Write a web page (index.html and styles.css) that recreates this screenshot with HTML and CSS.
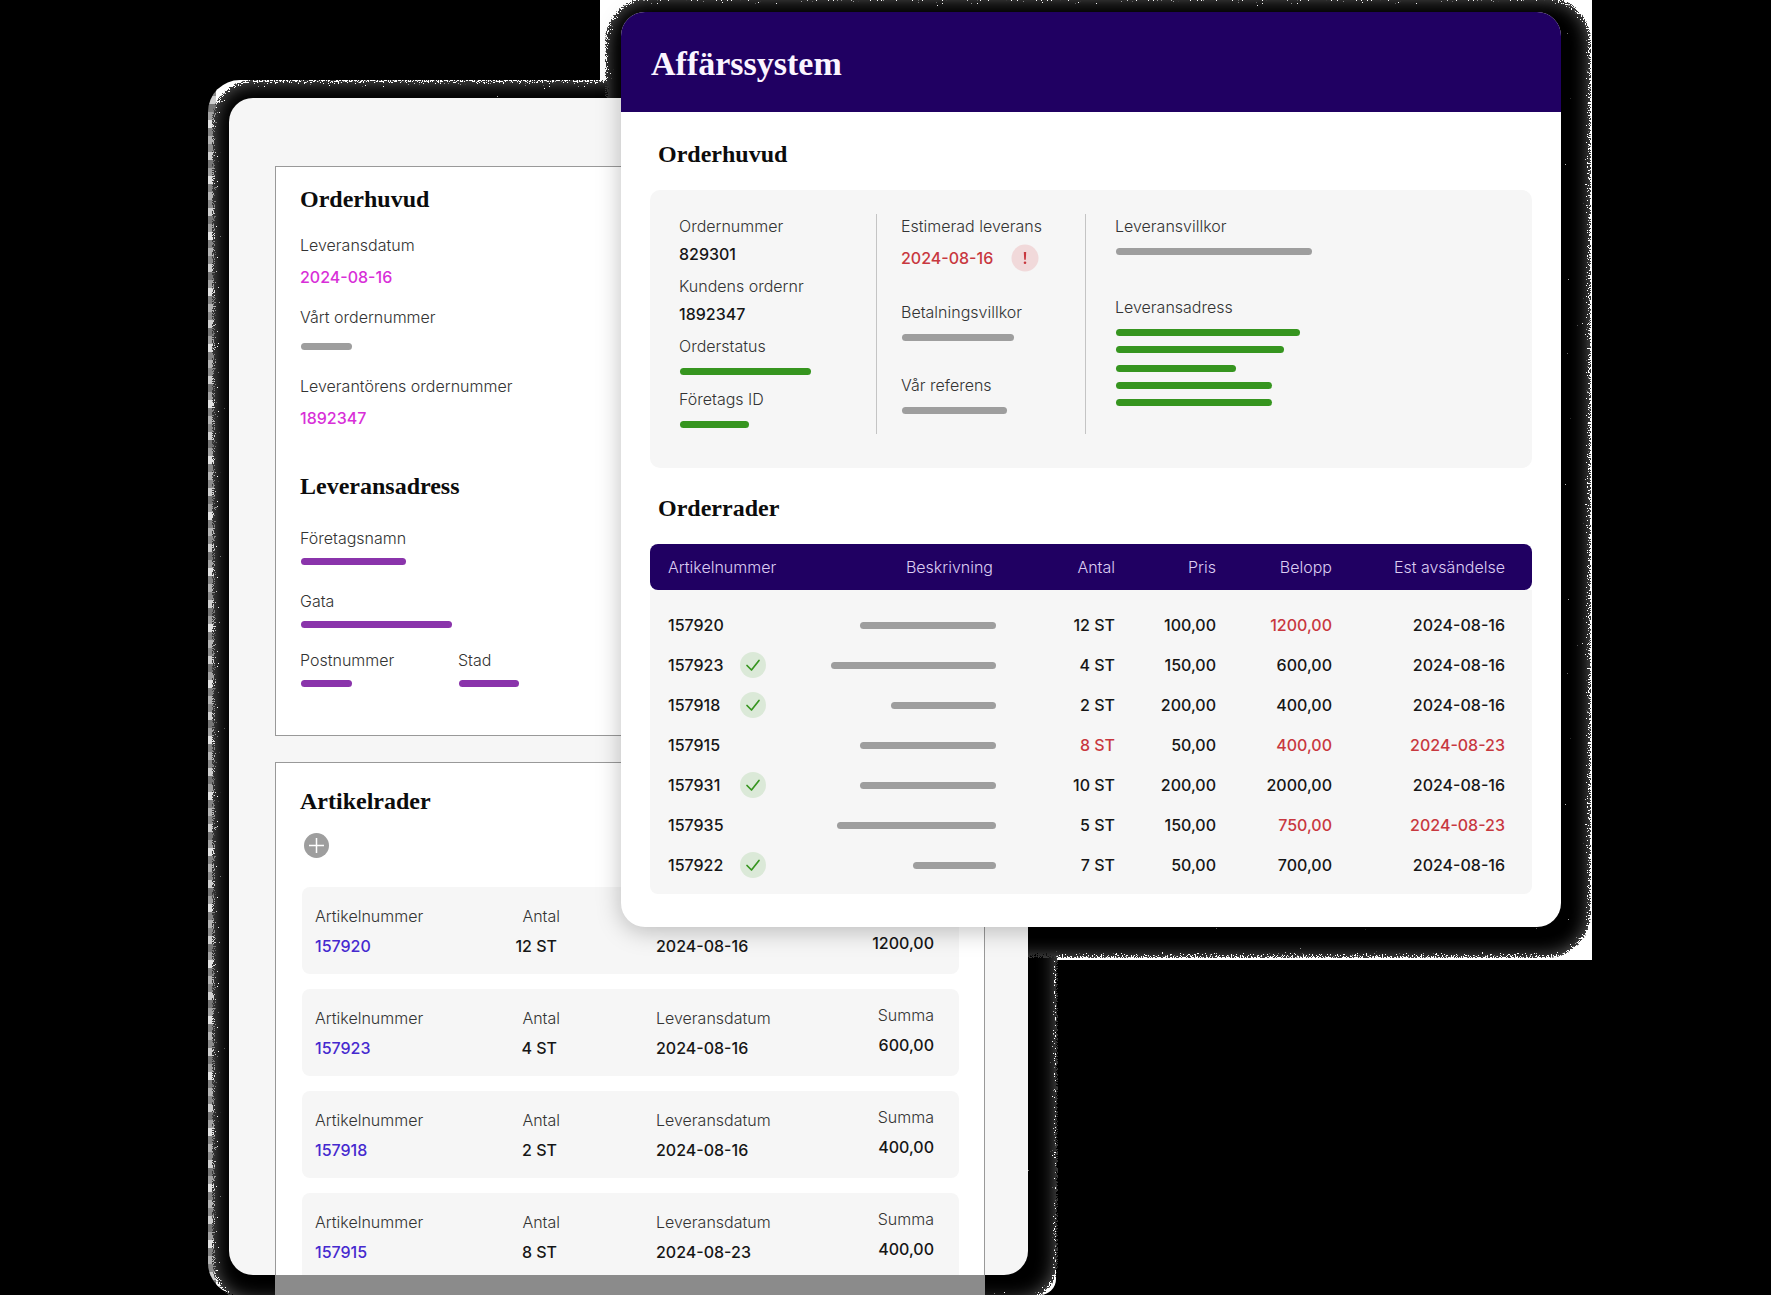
FILE: index.html
```html
<!DOCTYPE html>
<html lang="sv">
<head>
<meta charset="utf-8">
<meta name="viewport" content="width=device-width, initial-scale=1">
<title>Affärssystem</title>
<link rel="stylesheet" href="styles.css">
</head>
<body>
<svg class="defs" aria-hidden="true">
  <filter id="grain" x="-1%" y="-1%" width="102%" height="102%" color-interpolation-filters="sRGB">
    <feGaussianBlur in="SourceAlpha" stdDeviation="5" result="soft"/>
    <feTurbulence type="fractalNoise" baseFrequency="0.8" numOctaves="2" seed="4"/>
    <feColorMatrix values="0 0 0 0 0  0 0 0 0 0  0 0 0 0 0  1.200 0 0 0 -0.080" result="noise"/>
    <feComposite in="soft" in2="noise" operator="arithmetic" k2="1" k3="1" k4="-1.080"/>
    <feComponentTransfer result="mask"><feFuncA type="linear" slope="30"/></feComponentTransfer>
    <feComposite in="SourceGraphic" in2="mask" operator="in"/>
  </filter>
  <symbol id="check" viewBox="0 0 26 26">
    <path d="M7 13.5 11.5 18 19 8.500" fill="none" stroke="currentColor" stroke-width="1.700" stroke-linecap="round" stroke-linejoin="round"/>
  </symbol>
</svg>
<main class="stage">
  <section class="document">
    <div class="sheet">
      <div class="panel">
        <h2 class="heading">Orderhuvud</h2>
        <p class="label t18">Leveransdatum</p>
        <p class="value magenta t8">2024-08-16</p>
        <p class="label t16">Vårt ordernummer</p>
        <span class="bar gray t14" style="width:51px"></span>
        <p class="label t24">Leverantörens ordernummer</p>
        <p class="value magenta t8">1892347</p>
        <h2 class="heading t40">Leveransadress</h2>
        <p class="label t24">Företagsnamn</p>
        <span class="bar violet t8" style="width:105px"></span>
        <p class="label t24">Gata</p>
        <span class="bar violet t8" style="width:151px"></span>
        <div class="place t20">
          <div>
            <p class="label">Postnummer</p>
            <span class="bar violet t8" style="width:51px"></span>
          </div>
          <div>
            <p class="label">Stad</p>
            <span class="bar violet t8" style="width:60px"></span>
          </div>
        </div>
      </div>
      <div class="panel panel-rows">
        <h2 class="heading">Artikelrader</h2>
        <button class="add t16" type="button" aria-label="Lägg till artikelrad">
          <svg viewBox="0 0 25 25" width="25" height="25"><circle cx="12.500" cy="12.500" r="12.500" fill="#9e9e9e"/><path d="M12.500 5v15M5 12.500h15" stroke="#fff" stroke-width="1.500"/></svg>
        </button>
        <div class="cards">
          <dl class="card">
            <div><dt>Artikelnummer</dt><dd class="blue">157920</dd></div>
            <div class="qty"><dt>Antal</dt><dd>12 ST</dd></div>
            <div class="date"><dt>Leveransdatum</dt><dd>2024-08-16</dd></div>
            <div class="sum"><dt>Summa</dt><dd>1200,00</dd></div>
          </dl>
          <dl class="card">
            <div><dt>Artikelnummer</dt><dd class="blue">157923</dd></div>
            <div class="qty"><dt>Antal</dt><dd>4 ST</dd></div>
            <div class="date"><dt>Leveransdatum</dt><dd>2024-08-16</dd></div>
            <div class="sum"><dt>Summa</dt><dd>600,00</dd></div>
          </dl>
          <dl class="card">
            <div><dt>Artikelnummer</dt><dd class="blue">157918</dd></div>
            <div class="qty"><dt>Antal</dt><dd>2 ST</dd></div>
            <div class="date"><dt>Leveransdatum</dt><dd>2024-08-16</dd></div>
            <div class="sum"><dt>Summa</dt><dd>400,00</dd></div>
          </dl>
          <dl class="card">
            <div><dt>Artikelnummer</dt><dd class="blue">157915</dd></div>
            <div class="qty"><dt>Antal</dt><dd>8 ST</dd></div>
            <div class="date"><dt>Leveransdatum</dt><dd>2024-08-23</dd></div>
            <div class="sum"><dt>Summa</dt><dd>400,00</dd></div>
          </dl>
        </div>
      </div>
    </div>
    <div class="tail"></div>
  </section>

  <section class="system">
    <div class="window">
      <header class="titlebar"><h1>Affärssystem</h1></header>
      <div class="content">
        <h2 class="heading">Orderhuvud</h2>
        <div class="info">
          <div class="col">
            <p class="label">Ordernummer</p>
            <p class="value t4">829301</p>
            <p class="label t8">Kundens ordernr</p>
            <p class="value t4">1892347</p>
            <p class="label t8">Orderstatus</p>
            <span class="bar green t10" style="width:131px"></span>
            <p class="label t12">Företags ID</p>
            <span class="bar green t10" style="width:69px"></span>
          </div>
          <div class="col">
            <p class="label">Estimerad leverans</p>
            <p class="value alert red">2024-08-16
              <svg class="warning" viewBox="0 0 28 28" width="28" height="28" role="img" aria-label="Avvikelse"><circle cx="14" cy="14" r="13.500" fill="#f1d9da"/><path d="M12.800 8h2.400l-.4 7.800h-1.600z" fill="#c8383f"/><circle cx="14" cy="18.800" r="1.300" fill="#c8383f"/></svg>
            </p>
            <p class="label t28">Betalningsvillkor</p>
            <span class="bar gray t10" style="width:112px"></span>
            <p class="label t32">Vår referens</p>
            <span class="bar gray t10" style="width:105px"></span>
          </div>
          <div class="col">
            <p class="label">Leveransvillkor</p>
            <span class="bar gray t10" style="width:196px"></span>
            <p class="label t40">Leveransadress</p>
            <span class="bar green t10" style="width:184px"></span>
            <span class="bar green t10" style="width:168px"></span>
            <span class="bar green t12" style="width:120px"></span>
            <span class="bar green t10" style="width:156px"></span>
            <span class="bar green t10" style="width:156px"></span>
          </div>
        </div>
        <h2 class="heading t24">Orderrader</h2>
        <table class="rows">
          <colgroup><col class="c1"><col class="c2"><col class="c3"><col class="c4"><col class="c5"><col class="c6"></colgroup>
          <thead>
            <tr><th>Artikelnummer</th><th>Beskrivning</th><th>Antal</th><th>Pris</th><th>Belopp</th><th>Est avsändelse</th></tr>
          </thead>
          <tbody>
            <tr><td><span class="no">157920</span></td><td><span class="bar gray" style="width:136px"></span></td><td>12 ST</td><td>100,00</td><td class="red">1200,00</td><td>2024-08-16</td></tr>
            <tr><td><span class="no">157923</span><svg class="ok"><use href="#check"/></svg></td><td><span class="bar gray" style="width:165px"></span></td><td>4 ST</td><td>150,00</td><td>600,00</td><td>2024-08-16</td></tr>
            <tr><td><span class="no">157918</span><svg class="ok"><use href="#check"/></svg></td><td><span class="bar gray" style="width:105px"></span></td><td>2 ST</td><td>200,00</td><td>400,00</td><td>2024-08-16</td></tr>
            <tr><td><span class="no">157915</span></td><td><span class="bar gray" style="width:136px"></span></td><td class="red">8 ST</td><td>50,00</td><td class="red">400,00</td><td class="red">2024-08-23</td></tr>
            <tr><td><span class="no">157931</span><svg class="ok"><use href="#check"/></svg></td><td><span class="bar gray" style="width:136px"></span></td><td>10 ST</td><td>200,00</td><td>2000,00</td><td>2024-08-16</td></tr>
            <tr><td><span class="no">157935</span></td><td><span class="bar gray" style="width:159px"></span></td><td>5 ST</td><td>150,00</td><td class="red">750,00</td><td class="red">2024-08-23</td></tr>
            <tr><td><span class="no">157922</span><svg class="ok"><use href="#check"/></svg></td><td><span class="bar gray" style="width:83px"></span></td><td>7 ST</td><td>50,00</td><td>700,00</td><td>2024-08-16</td></tr>
          </tbody>
        </table>
      </div>
    </div>
  </section>
</main>
</body>
</html>
```
FILE: styles.css
```css
* { box-sizing: border-box; }

body {
  margin: 0;
  background: #000;
  color: #161616;
  font: 500 16px/24px Inter, "Liberation Sans", sans-serif;
}

h1, h2, p, dl, dt, dd { margin: 0; }

.defs { position: absolute; width: 0; height: 0; }

/* Two overlapping windows share one grid row */
.stage {
  display: grid;
  grid-template-columns: 229fr 392fr 407fr 533fr 210fr;
  align-items: start;
  min-height: 100vh;
  overflow: clip;
  isolation: isolate;
}

.document { grid-area: 1 / 2 / 2 / 4; margin-top: 98px; position: relative; }
.system { grid-area: 1 / 3 / 2 / 5; margin-top: 12px; position: relative; }

/* Grainy halo: a pale plate with a dissolving dark plate on top */
.document::before, .system::before,
.document::after, .system::after { content: ""; position: absolute; }

.document::before {
  inset: -18px -28px 0 -21px;
  z-index: -3;
  border-radius: 32px 16px 16px 32px;
  background:
    repeating-linear-gradient(#b4b4b4 0 8px, #8c8c8c 8px 16px, #cfcfcf 16px 24px, #777 24px 32px, #a2a2a2 32px 40px, #e2e2e2 40px 48px, #848484 48px 56px) left / 8px 100% no-repeat,
    #fff;
}
.document::after {
  inset: -18px -30px -8px -17px;
  z-index: -2;
  border-radius: 40px;
  background: #000;
  box-shadow: inset 0 0 20px #777;
  filter: url(#grain);
}
.system::before {
  inset: -20px -31px -33px -21px;
  z-index: -3;
  background: #fff;
}
.system::after {
  inset: -15px -30px -31px -16px;
  z-index: -2;
  border-radius: 44px;
  background: #000;
  box-shadow: inset 0 0 20px #777;
  filter: url(#grain);
}

.sheet {
  padding: 68px 43px 0 46px;
  border-radius: 24px;
  background: #f6f6f6;
}
.tail {
  height: 20px;
  margin: 0 43px 0 46px;
  background: #8b8b8b;
}

.panel {
  padding: 16px 24px 48px;
  border: 1px solid #999;
  background: #fff;
}
.panel-rows {
  margin-top: 26px;
  padding: 22px 25px 0 24px;
  border-bottom: 0;
}

.heading {
  font: 700 24px/32px "Liberation Serif", serif;
  color: #0c0c0c;
}
.label, dt { font-weight: 300; color: #333; }
.value, dd { font-weight: 500; }

.t4 { margin-top: 4px; }
.t8 { margin-top: 8px; }
.t10 { margin-top: 10px; }
.t12 { margin-top: 12px; }
.t14 { margin-top: 14px; }
.t16 { margin-top: 16px; }
.t18 { margin-top: 18px; }
.t20 { margin-top: 20px; }
.t24 { margin-top: 24px; }
.t28 { margin-top: 28px; }
.t32 { margin-top: 32px; }
.t40 { margin-top: 40px; }

.magenta { color: #d82fd8; }
.blue { color: #4529cf; }
.red { color: #c8383f; }

.bar {
  display: block;
  height: 7px;
  margin-left: 1px;
  border-radius: 4px;
}
.bar.gray { background: #9e9e9e; }
.bar.violet { background: #8a34ab; }
.bar.green { background: #36951f; }

.place { display: grid; grid-template-columns: 158px 1fr; }

.add {
  display: block;
  margin-left: 4px;
  padding: 0;
  border: 0;
  background: none;
  height: 25px;
}
.add svg { display: block; }

.cards {
  display: grid;
  gap: 15px;
  margin: 29px 0 0 2px;
}
.card {
  display: grid;
  grid-template-columns: 150fr 95fr 250fr 124fr;
  padding: 14px 25px 16px 13px;
  border-radius: 8px;
  background: #f6f6f6;
}
.card:last-child { padding-bottom: 11px; border-radius: 8px 8px 0 0; }
.card > div { display: grid; gap: 6px; padding-top: 3px; align-content: start; }
.card .qty { text-align: right; }
.card .qty dd { padding-right: 3px; }
.card .date { padding-left: 96px; }
.card .sum { padding-top: 0; text-align: right; }

.window {
  overflow: hidden;
  border-radius: 24px;
  background: #fff;
  box-shadow: 0 4px 24px rgba(0, 0, 0, .25);
}
.titlebar {
  display: flex;
  align-items: center;
  height: 100px;
  padding: 4px 30px 0;
  background: #200062;
}
.titlebar h1 {
  font: 700 34px/40px "Liberation Serif", serif;
  color: #fbf4ff;
}
.content { padding: 26px 29px 33px; }
.content .heading { padding-left: 8px; margin-bottom: 20px; }

.info {
  display: grid;
  grid-template-columns: 226fr 209fr 447fr;
  padding: 24px 0 34px;
  border-radius: 10px;
  background: #f6f6f6;
}
.col { padding-left: 24px; min-height: 220px; }
.col:first-child { padding-left: 29px; }
.col:last-child { padding-left: 29px; }
.col + .col { border-left: 1px solid #c4c4c4; }
.alert { display: flex; align-items: center; gap: 18px; height: 28px; margin-top: 6px; }

.rows {
  width: 100%;
  table-layout: fixed;
  border-collapse: separate;
  border-spacing: 0;
  text-align: right;
}
.c1 { width: 140px; }
.c2 { width: 206px; }
.c3 { width: 119px; }
.c4 { width: 101px; }
.c5 { width: 116px; }
.c6 { width: 200px; }
.rows th {
  height: 46px;
  padding: 0;
  background: #200062;
  color: #dccdf2;
  font-weight: 300;
}
.rows th:first-child { border-radius: 8px 0 0 8px; }
.rows th:last-child { border-radius: 0 8px 8px 0; }
.rows th:nth-child(2) { padding-right: 3px; }
.rows td {
  height: 40px;
  padding: 0;
  background: #f6f6f6;
  vertical-align: middle;
}
.rows th:first-child, .rows td:first-child { padding-left: 18px; text-align: left; }
.rows th:last-child, .rows td:last-child { padding-right: 27px; }
.rows tbody tr:first-child td { height: 55px; padding-top: 15px; }
.rows tbody tr:last-child td { height: 49px; padding-bottom: 9px; }
.rows tbody tr:last-child td:first-child { border-radius: 0 0 0 8px; }
.rows tbody tr:last-child td:last-child { border-radius: 0 0 8px; }
.rows .bar { margin-left: auto; }
.rows td:first-child { line-height: 26px; }
.no { display: inline-block; width: 72px; vertical-align: top; }
.ok {
  display: inline-block;
  width: 26px;
  height: 26px;
  border-radius: 50%;
  background: #dbe9d8;
  color: #36951f;
  vertical-align: top;
}
```
